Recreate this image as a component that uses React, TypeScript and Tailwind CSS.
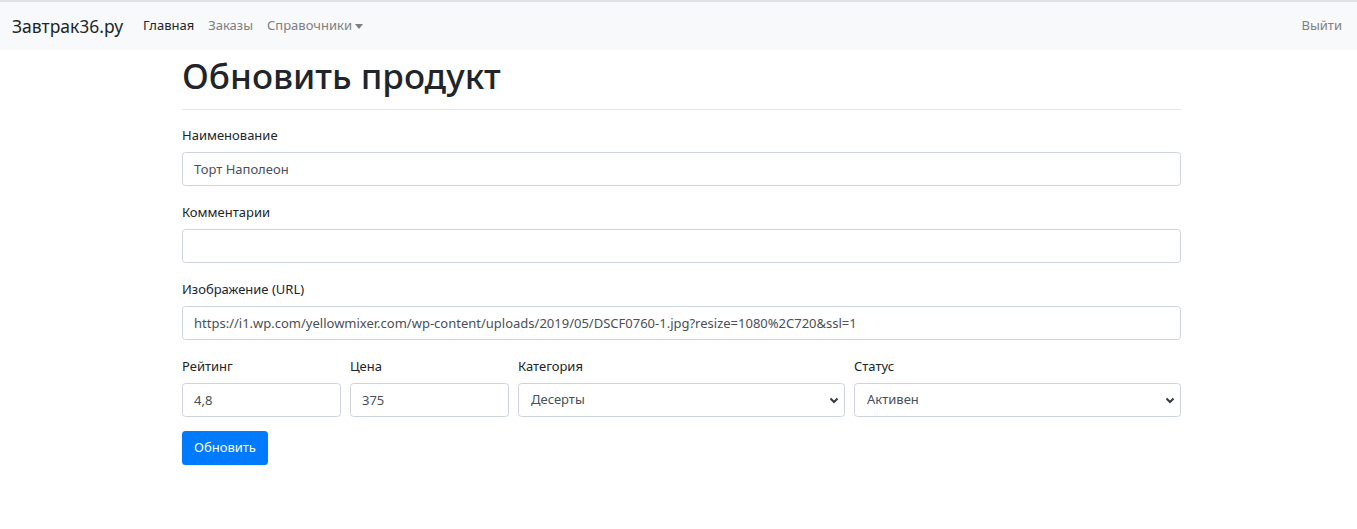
import React from "react";

const font = { fontFamily: '"Noto Sans", "Open Sans", sans-serif' };

const labelCls = "block text-[13px] text-[#212529] mb-[7px] leading-[19px]";
const inputCls =
  "block w-full h-[34px] px-[11px] text-[13px] text-[#495057] bg-white border border-[#ced4da] rounded-[3.5px] outline-none";

const Field = ({ label, value }: { label: string; value: string }) => (
  <div className="mb-[17px]">
    <label className={labelCls}>{label}</label>
    <input readOnly value={value} className={inputCls} />
  </div>
);

const Chevron = () => (
  <svg width="10" height="7" viewBox="0 0 10 7" className="absolute right-[5px] top-[13px]">
    <path fill="none" stroke="#343a40" strokeWidth="2" d="M1.5 1.5L5 5 8.5 1.5" />
  </svg>
);

const SelectField = ({ label, value }: { label: string; value: string }) => (
  <div className="col-span-4">
    <label className={labelCls}>{label}</label>
    <div className="relative h-[34px] border border-[#ced4da] rounded-[3.5px] bg-white flex items-center px-[12px] text-[13px] text-[#495057]">
      {value}
      <Chevron />
    </div>
  </div>
);

export default function App() {
  return (
    <div className="min-h-[529px] bg-white" style={font}>
      <nav className="h-[50px] bg-[#f8f9fa] border-t-2 border-[#dee2e6] flex items-center pl-[12px] pr-[15px]">
        <span className="text-[17.5px] text-[#212529] mr-[20px]">Завтрак36.ру</span>
        <div className="flex items-center gap-[14px] text-[13px]">
          <span className="text-[#212529]">Главная</span>
          <span className="text-[#7f7f7f]">Заказы</span>
          <span className="text-[#7f7f7f] flex items-center">
            Справочники
            <span className="ml-[3px] inline-block w-0 h-0 border-l-[4px] border-r-[4px] border-t-[5px] border-l-transparent border-r-transparent border-t-[#7f7f7f]" />
          </span>
        </div>
        <span className="ml-auto text-[13px] text-[#7f7f7f]">Выйти</span>
      </nav>

      <main className="w-[999px] ml-[182px]">
        <h1 className="text-[35px] font-medium text-[#212529] leading-[42px] mt-[5px] mb-[12px]">Обновить продукт</h1>
        <hr className="border-t border-[#e5e5e5] mb-[16px]" />

        <Field label="Наименование" value="Торт Наполеон" />
        <Field label="Комментарии" value="" />
        <Field label="Изображение (URL)" value="https://i1.wp.com/yellowmixer.com/wp-content/uploads/2019/05/DSCF0760-1.jpg?resize=1080%2C720&ssl=1" />

        <div className="grid grid-cols-12 gap-x-[9px] mb-[14px]">
          <div className="col-span-2">
            <label className={labelCls}>Рейтинг</label>
            <input readOnly value="4,8" className={inputCls} />
          </div>
          <div className="col-span-2">
            <label className={labelCls}>Цена</label>
            <input readOnly value="375" className={inputCls} />
          </div>
          <SelectField label="Категория" value="Десерты" />
          <SelectField label="Статус" value="Активен" />
        </div>

        <button className="h-[34px] w-[86px] bg-[#007bff] text-white text-[13px] rounded-[3.5px]">Обновить</button>
      </main>
    </div>
  );
}
